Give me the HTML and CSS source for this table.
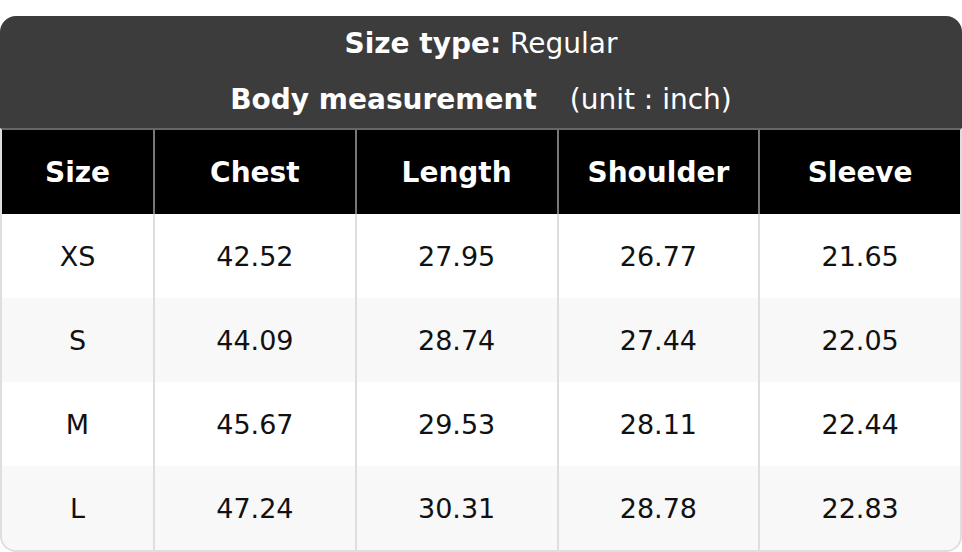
FILE: index.html
```html
<!DOCTYPE html>
<html>
<head>
<meta charset="utf-8">
<link rel="stylesheet" href="styles.css">
</head>
<body>
<div class="card">
  <div class="title">
    <div class="line"><b>Size type:</b> Regular</div>
    <div class="line"><b>Body measurement</b><span class="unit">(unit : inch)</span></div>
  </div>
  <div class="table">
    <div class="row head">
      <div class="cell">Size</div>
      <div class="cell">Chest</div>
      <div class="cell">Length</div>
      <div class="cell">Shoulder</div>
      <div class="cell">Sleeve</div>
    </div>
    <div class="row">
      <div class="cell">XS</div>
      <div class="cell">42.52</div>
      <div class="cell">27.95</div>
      <div class="cell">26.77</div>
      <div class="cell">21.65</div>
    </div>
    <div class="row alt">
      <div class="cell">S</div>
      <div class="cell">44.09</div>
      <div class="cell">28.74</div>
      <div class="cell">27.44</div>
      <div class="cell">22.05</div>
    </div>
    <div class="row">
      <div class="cell">M</div>
      <div class="cell">45.67</div>
      <div class="cell">29.53</div>
      <div class="cell">28.11</div>
      <div class="cell">22.44</div>
    </div>
    <div class="row alt">
      <div class="cell">L</div>
      <div class="cell">47.24</div>
      <div class="cell">30.31</div>
      <div class="cell">28.78</div>
      <div class="cell">22.83</div>
    </div>
  </div>
</div>
</body>
</html>
```

FILE: styles.css
```css
html, body {
  margin: 0;
  padding: 0;
  background: #fff;
}
body {
  font-family: "DejaVu Sans", sans-serif;
  font-size: 27px;
  color: #111;
}
.card {
  width: 962px;
  margin-top: 16px;
}
.title {
  height: 112px;
  background: #3c3c3c;
  color: #fff;
  border-radius: 16px 16px 0 0;
  text-align: center;
  font-size: 28px;
}
.title .line {
  height: 56px;
  line-height: 56px;
}
.title b {
  font-weight: bold;
}
.unit {
  margin-left: 33px;
}
.table {
  border: 2px solid #dedede;
  border-top: 2px solid #666;
  border-radius: 0 0 16px 16px;
  overflow: hidden;
}
.row {
  display: grid;
  grid-template-columns: 151px repeat(4, 1fr);
  height: 84px;
  background: #fff;
}
.row.alt {
  background: #f8f8f8;
}
.cell {
  display: flex;
  align-items: center;
  justify-content: center;
  border-left: 2px solid #dedede;
}
.cell:first-child {
  border-left: none;
}
.row.head {
  background: #000;
  color: #fff;
  font-weight: bold;
  font-size: 28px;
}
.row.head .cell {
  border-left-color: #777;
}
.row.head .cell:first-child {
  border-left: none;
}
```
